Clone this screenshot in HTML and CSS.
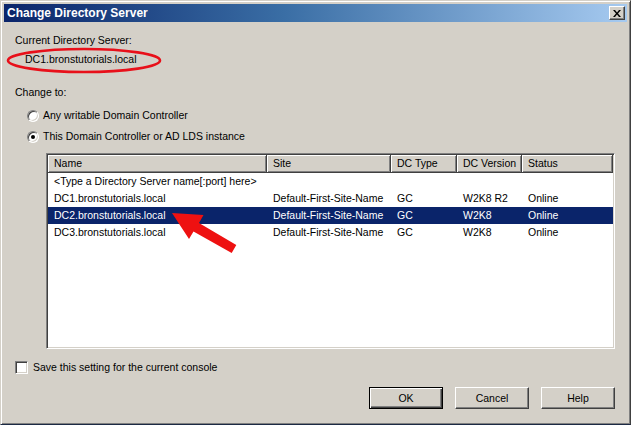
FILE: index.html
```html
<!DOCTYPE html>
<html>
<head>
<meta charset="utf-8">
<link rel="stylesheet" href="styles.css">
</head>
<body>
<div class="window">
  <div class="titlebar">
    <span class="title">Change Directory Server</span>
    <span class="close">
      <svg width="8" height="7" viewBox="0 0 8 7"><path d="M0 0 L2 0 L4 2.5 L6 0 L8 0 L5 3.5 L8 7 L6 7 L4 4.5 L2 7 L0 7 L3 3.5 Z" fill="#000"/></svg>
    </span>
  </div>
  <div class="content">
    <div class="label first">Current Directory Server:</div>
    <div class="current">DC1.bronstutorials.local</div>
    <div class="label change">Change to:</div>
    <div class="radio-row r1"><span class="radio"></span><span>Any writable Domain Controller</span></div>
    <div class="radio-row r2"><span class="radio checked"></span><span>This Domain Controller or AD LDS instance</span></div>
    <div class="listview">
      <div class="grid header">
        <div class="hcell">Name</div>
        <div class="hcell">Site</div>
        <div class="hcell">DC Type</div>
        <div class="hcell">DC Version</div>
        <div class="hcell">Status</div>
      </div>
      <div class="grid row">
        <div class="cell">&lt;Type a Directory Server name[:port] here&gt;</div>
        <div class="cell"></div><div class="cell"></div><div class="cell"></div><div class="cell"></div>
      </div>
      <div class="grid row">
        <div class="cell">DC1.bronstutorials.local</div>
        <div class="cell">Default-First-Site-Name</div>
        <div class="cell">GC</div>
        <div class="cell">W2K8 R2</div>
        <div class="cell">Online</div>
      </div>
      <div class="grid row selected">
        <div class="cell">DC2.bronstutorials.local</div>
        <div class="cell">Default-First-Site-Name</div>
        <div class="cell">GC</div>
        <div class="cell">W2K8</div>
        <div class="cell">Online</div>
      </div>
      <div class="grid row">
        <div class="cell">DC3.bronstutorials.local</div>
        <div class="cell">Default-First-Site-Name</div>
        <div class="cell">GC</div>
        <div class="cell">W2K8</div>
        <div class="cell">Online</div>
      </div>
    </div>
    <div class="check-row"><span class="checkbox"></span><span>Save this setting for the current console</span></div>
    <div class="buttons">
      <button class="btn default">OK</button>
      <button class="btn">Cancel</button>
      <button class="btn">Help</button>
    </div>
  </div>
  <svg class="annot" width="631" height="425" viewBox="0 0 631 425">
    <ellipse cx="84" cy="60.5" rx="76" ry="11.5" fill="none" stroke="#e8101a" stroke-width="2.6"/>
    <polygon points="172,213 203.5,215 199,223 236.3,245.1 231.7,252.9 193.5,231.5 189,239" fill="#ee1111"/>
  </svg>
</div>
</body>
</html>
```

FILE: styles.css
```css
* { box-sizing: border-box; }
html, body { margin: 0; padding: 0; background: #d4d0c8; }
body {
  font-family: "Liberation Sans", Arial, sans-serif;
  font-size: 10.5px;
  color: #000;
}
.window {
  position: relative;
  width: 631px;
  height: 425px;
  background: #d4d0c8;
  border: 1px solid;
  border-color: #d4d0c8 #404040 #1c2a44 #d4d0c8;
  box-shadow: inset 1px 1px #ffffff, inset -1px -1px #808080;
  padding: 3px;
  display: flex;
  flex-direction: column;
}
.titlebar {
  height: 18px;
  background: linear-gradient(to right, #0a246a 0%, #3a6ea5 45%, #a6caf0 100%);
  display: flex;
  align-items: center;
  justify-content: space-between;
  padding: 0 2px 0 3px;
}
.title {
  color: #fff;
  font-weight: bold;
  font-size: 12px;
  line-height: 18px;
}
.close {
  width: 16px;
  height: 14px;
  background: #d4d0c8;
  border: 1px solid;
  border-color: #ffffff #404040 #404040 #ffffff;
  box-shadow: inset -1px -1px #808080;
  display: flex;
  align-items: center;
  justify-content: center;
  padding-right: 1px;
}
.close svg { display: block; }
.content {
  flex: 1;
  display: flex;
  flex-direction: column;
  padding: 0 12px 0 11px;
}
.label, .current, .radio-row, .check-row {
  line-height: 13px;
  height: 13px;
  white-space: nowrap;
}
.label.first { margin-top: 12px; }
.current { margin-top: 6px; padding-left: 10px; }
.label.change { margin-top: 20px; }
.radio-row {
  display: flex;
  align-items: center;
  gap: 4px;
  padding-left: 12px;
}
.radio-row.r1 { margin-top: 10px; }
.radio-row.r2 { margin-top: 8px; }
.radio {
  width: 12px;
  height: 12px;
  border-radius: 50%;
  background: #fff;
  border: 1px solid;
  border-color: #808080 #ffffff #ffffff #808080;
  box-shadow: inset 1px 1px #404040, inset -1px -1px #d4d0c8;
  display: flex;
  align-items: center;
  justify-content: center;
  flex: none;
}
.radio.checked::after {
  content: "";
  width: 4px;
  height: 4px;
  border-radius: 50%;
  background: #000;
}
.listview {
  margin-top: 10px;
  margin-left: 31px;
  height: 196px;
  background: #fff;
  border: 1px solid;
  border-color: #808080 #ffffff #ffffff #808080;
  box-shadow: inset 1px 1px #404040, inset -1px -1px #d4d0c8;
  padding: 1px;
  overflow: hidden;
}
.grid {
  display: grid;
  grid-template-columns: 219px 124px 66px 65px 91px;
}
.hcell {
  height: 18px;
  line-height: 16px;
  padding-left: 6px;
  background: #d4d0c8;
  border-right: 1px solid #404040;
  border-bottom: 1px solid #404040;
  box-shadow: inset 1px 1px #ffffff, inset -1px -1px #808080;
  white-space: nowrap;
}
.row { height: 17px; }
.cell {
  line-height: 17px;
  padding-left: 6px;
  white-space: nowrap;
  overflow: visible;
}
.row.selected {
  background: #0a246a;
  color: #fff;
}
.check-row {
  margin-top: 12px;
  display: flex;
  align-items: center;
  gap: 5px;
}
.checkbox {
  width: 13px;
  height: 13px;
  background: #fff;
  border: 1px solid;
  border-color: #808080 #ffffff #ffffff #808080;
  box-shadow: inset 1px 1px #404040, inset -1px -1px #d4d0c8;
  flex: none;
}
.buttons {
  margin-top: 13px;
  display: flex;
  justify-content: flex-end;
  gap: 12px;
}
.btn {
  width: 74px;
  height: 22px;
  margin: 0;
  padding: 0;
  font-family: "Liberation Sans", Arial, sans-serif;
  font-size: 10.5px;
  color: #000;
  background: #d4d0c8;
  border: 1px solid;
  border-color: #ffffff #404040 #404040 #ffffff;
  box-shadow: inset -1px -1px #808080;
}
.btn.default {
  border: 1px solid #000;
  box-shadow: inset 1px 1px #ffffff, inset -1px -1px #404040, inset -2px -2px #808080;
}
.annot {
  position: absolute;
  left: -1px;
  top: -1px;
  pointer-events: none;
}
```
